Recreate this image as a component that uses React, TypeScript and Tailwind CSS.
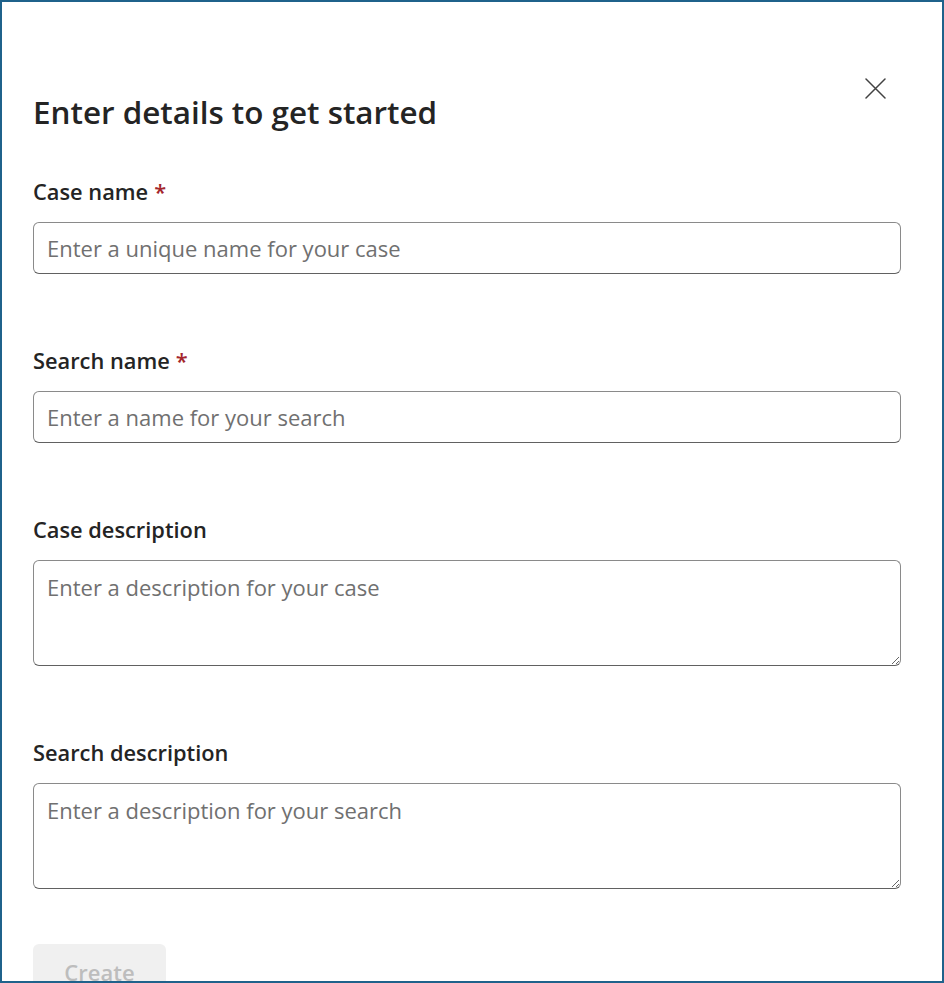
import React from 'react';

interface FieldProps {
  label: string;
  placeholder: string;
  required?: boolean;
  multiline?: boolean;
}

const Field: React.FC<FieldProps> = ({ label, placeholder, required, multiline }) => {
  return (
    <div className="flex flex-col">
      <label className="h-[28px] leading-[28px] text-[21.8px] font-semibold text-[#242424]">
        {label}
        {required && <span className="ml-[6px] text-[#a4262c]">*</span>}
      </label>
      {multiline ? (
        <textarea
          placeholder={placeholder}
          className="mt-[16px] h-[106px] w-full rounded-[6px] border border-[#8a8a8a] border-b-[#616161] bg-white px-[13px] pt-[12px] text-[22px] leading-[28px] text-[#242424] placeholder:text-[#707070] outline-none"
        />
      ) : (
        <input
          placeholder={placeholder}
          className="mt-[16px] h-[52px] w-full rounded-[6px] border border-[#8a8a8a] border-b-[#616161] bg-white px-[13px] text-[22px] text-[#242424] placeholder:text-[#707070] outline-none"
        />
      )}
    </div>
  );
};

const App: React.FC = () => {
  return (
    <div
      className="relative h-[983px] w-[944px] overflow-hidden border-2 border-[#1f628b] bg-white"
      style={{ fontFamily: '"Segoe UI", "Open Sans", "Noto Sans", sans-serif' }}
    >
      <div className="pl-[31px] pr-[41px] pt-[75px]">
        <div className="flex items-start justify-between">
          <h1 className="mt-[15px] h-[40px] text-[31.4px] font-semibold leading-[40px] text-[#242424]">
            Enter details to get started
          </h1>
          <button className="mr-[14px] flex h-[22px] w-[24px] items-center justify-center text-[#424242]">
            <svg width="21" height="21" viewBox="0 0 21 21" fill="none">
              <path d="M1 1L20 20M20 1L1 20" stroke="currentColor" strokeWidth="1.5" strokeLinecap="round" />
            </svg>
          </button>
        </div>

        <div className="mt-[46px] flex flex-col gap-[73px]">
          <Field label="Case name" placeholder="Enter a unique name for your case" required />
          <Field label="Search name" placeholder="Enter a name for your search" required />
          <Field label="Case description" placeholder="Enter a description for your case" multiline />
          <Field label="Search description" placeholder="Enter a description for your search" multiline />
        </div>

        <button
          disabled
          className="mt-[55px] h-[56px] w-[133px] rounded-[6px] bg-[#f0f0f0] text-[22px] font-semibold text-[#bdbdbd]"
        >
          Create
        </button>
      </div>
    </div>
  );
};

export default App;
